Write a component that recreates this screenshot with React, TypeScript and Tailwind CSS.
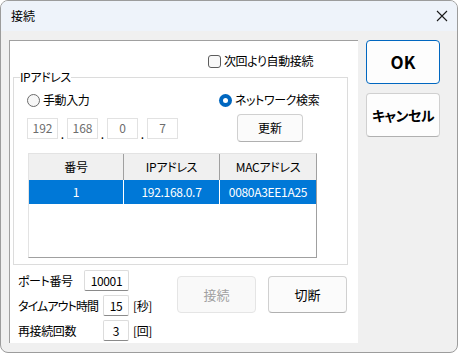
import React from 'react';

const jp = "font-['Noto_Sans_CJK_JP','Noto_Sans',sans-serif] [font-feature-settings:'palt']";

// Japanese labels kept as escapes so the bundle stays ASCII
const T = {
  title: '\u63a5\u7d9a',
  auto: '\u6b21\u56de\u3088\u308a\u81ea\u52d5\u63a5\u7d9a',
  ip: 'IP\u30a2\u30c9\u30ec\u30b9',
  mac: 'MAC\u30a2\u30c9\u30ec\u30b9',
  manual: '\u624b\u52d5\u5165\u529b',
  net: '\u30cd\u30c3\u30c8\u30ef\u30fc\u30af\u691c\u7d22',
  refresh: '\u66f4\u65b0',
  no: '\u756a\u53f7',
  port: '\u30dd\u30fc\u30c8\u756a\u53f7',
  timeout: '\u30bf\u30a4\u30e0\u30a2\u30a6\u30c8\u6642\u9593',
  sec: '[\u79d2]',
  retry: '\u518d\u63a5\u7d9a\u56de\u6570',
  times: '[\u56de]',
  cut: '\u5207\u65ad',
  cancel: '\u30ad\u30e3\u30f3\u30bb\u30eb',
};

function Radio({ checked, label }: { checked?: boolean; label: string }) {
  return (
    <div className="flex items-center gap-[3px]">
      {checked ? (
        <span className="w-[13px] h-[13px] rounded-full bg-[#0067c0] flex items-center justify-center">
          <span className="w-[5px] h-[5px] rounded-full bg-white" />
        </span>
      ) : (
        <span className="w-[13px] h-[13px] rounded-full border border-[#6b6b6b] bg-[#f7f7f7]" />
      )}
      <span className="text-[12px] leading-[16px] tracking-[-0.4px] text-black whitespace-nowrap">{label}</span>
    </div>
  );
}

function IpBox({ v }: { v: string }) {
  return (
    <div className="w-[31px] h-[21px] border border-[#e2e2e2] bg-white flex items-center justify-center text-[12px] text-[#6d6d6d]">
      {v}
    </div>
  );
}

function Field({ v, w }: { v: string; w: string }) {
  return (
    <div className={`${w} shrink-0 h-[21px] border border-[#dcdcdc] border-b-[#8a8a8a] rounded-[2px] bg-white flex items-center justify-center text-[12px] text-black`}>
      {v}
    </div>
  );
}

export default function App() {
  return (
    <div className={`w-[458px] h-[353px] border border-[#9c9c9c] rounded-[8px] overflow-hidden bg-[#f0f0f0] flex flex-col ${jp}`}>
      {/* title bar */}
      <div className="h-[30px] bg-[#eef3fa] flex items-center justify-between pl-[10px] pr-[9px] shrink-0">
        <span className="text-[12px] text-black">{T.title}</span>
        <svg width="12" height="12" viewBox="0 0 12 12">
          <path d="M1 1L11 11M11 1L1 11" stroke="#1a1a1a" strokeWidth="1.1" />
        </svg>
      </div>

      <div className="flex pt-[9px] pl-[8px]">
        {/* main panel */}
        <div className="w-[349px] h-[303px] bg-white border-t border-l border-[#a0a0a0] flex flex-col">
          <div className="mt-[13px] h-[14px] flex items-center pl-[198px]">
            <span className="w-[13px] h-[13px] rounded-[3px] border border-[#5c5c5c] bg-[#f8f8f8]" />
            <span className="ml-[3px] text-[12px] leading-[16px] tracking-[-0.4px] text-black whitespace-nowrap">{T.auto}</span>
          </div>

          <fieldset className="ml-[3px] mt-[1px] w-[335px] h-[196px] border border-[#dcdcdc] rounded-none">
            <legend className="ml-[6px] px-0 text-[12px] leading-[16px] tracking-[-0.4px] text-black">{T.ip}</legend>
            <div className="mt-[7px] pl-[13px] flex items-center">
              <div className="w-[192px]">
                <Radio label={T.manual} />
              </div>
              <Radio checked label={T.net} />
            </div>

            <div className="mt-[6px] pl-[13px] h-[28px] flex items-center">
              <IpBox v="192" />
              <span className="w-[9px] self-end mb-[2px] text-center text-[12px] leading-[12px] text-black">.</span>
              <IpBox v="168" />
              <span className="w-[9px] self-end mb-[2px] text-center text-[12px] leading-[12px] text-black">.</span>
              <IpBox v="0" />
              <span className="w-[9px] self-end mb-[2px] text-center text-[12px] leading-[12px] text-black">.</span>
              <IpBox v="7" />
              <button className="ml-[59px] w-[66px] h-[28px] rounded-[4px] border border-[#d0d0d0] border-b-[#b0b0b0] bg-[#fbfbfb] text-[12px] text-black">
                {T.refresh}
              </button>
            </div>

            <div className="mt-[11px] ml-[14px] w-[289px] h-[105px] border border-[#e3e3e3] border-r-[#a0a0a0] border-b-[#a0a0a0] bg-white flex flex-col text-[12px] tracking-[-0.3px]">
              <div className="h-[26px] flex bg-[#f0f0f0] text-black">
                <div className="w-[95px] flex items-center justify-center border-r border-[#a0a0a0]">{T.no}</div>
                <div className="w-[96px] flex items-center justify-center border-r border-[#a0a0a0]">{T.ip}</div>
                <div className="flex-1 flex items-center justify-center">{T.mac}</div>
              </div>
              <div className="h-[24px] flex bg-[#0078d7] text-white">
                <div className="w-[95px] flex items-center justify-center border-r border-white">1</div>
                <div className="w-[96px] flex items-center justify-center border-r border-white">192.168.0.7</div>
                <div className="flex-1 flex items-center justify-center">0080A3EE1A25</div>
              </div>
            </div>
          </fieldset>

          <div className="flex">
            <div className="w-[167px] shrink-0 pl-[8px] mt-[5px] flex flex-col gap-[4px] text-[12px] tracking-[-0.4px] text-black whitespace-nowrap">
              <div className="h-[21px] flex items-center">
                <span className="w-[66px] shrink-0">{T.port}</span>
                <Field v="10001" w="w-[45px]" />
              </div>
              <div className="h-[21px] flex items-center">
                <span className="w-[85px] shrink-0 tracking-[-0.9px]">{T.timeout}</span>
                <Field v="15" w="w-[26px]" />
                <span className="ml-[4px]">{T.sec}</span>
              </div>
              <div className="h-[21px] flex items-center">
                <span className="w-[85px] shrink-0">{T.retry}</span>
                <Field v="3" w="w-[26px]" />
                <span className="ml-[4px]">{T.times}</span>
              </div>
            </div>
            <div className="mt-[11px] flex gap-[12px]">
              <button className="w-[79px] h-[37px] rounded-[4px] border border-[#e5e5e5] bg-[#f9f9f9] text-[13px] text-[#a0a0a0]">
                {T.title}
              </button>
              <button className="w-[79px] h-[37px] rounded-[4px] border border-[#d0d0d0] border-b-[#b0b0b0] bg-[#fbfbfb] text-[13px] text-black">
                {T.cut}
              </button>
            </div>
          </div>
        </div>

        {/* side buttons */}
        <div className="ml-[8px] flex flex-col gap-[9px]">
          <button className="w-[74px] h-[44px] rounded-[4px] border border-[#0067c0] bg-[#fdfdfd] text-[17px] font-bold text-black">
            OK
          </button>
          <button className="w-[74px] h-[44px] rounded-[4px] border border-[#d0d0d0] border-b-[#b0b0b0] bg-[#fdfdfd] text-[14px] tracking-[-0.5px] font-bold text-black whitespace-nowrap">
            {T.cancel}
          </button>
        </div>
      </div>
    </div>
  );
}
